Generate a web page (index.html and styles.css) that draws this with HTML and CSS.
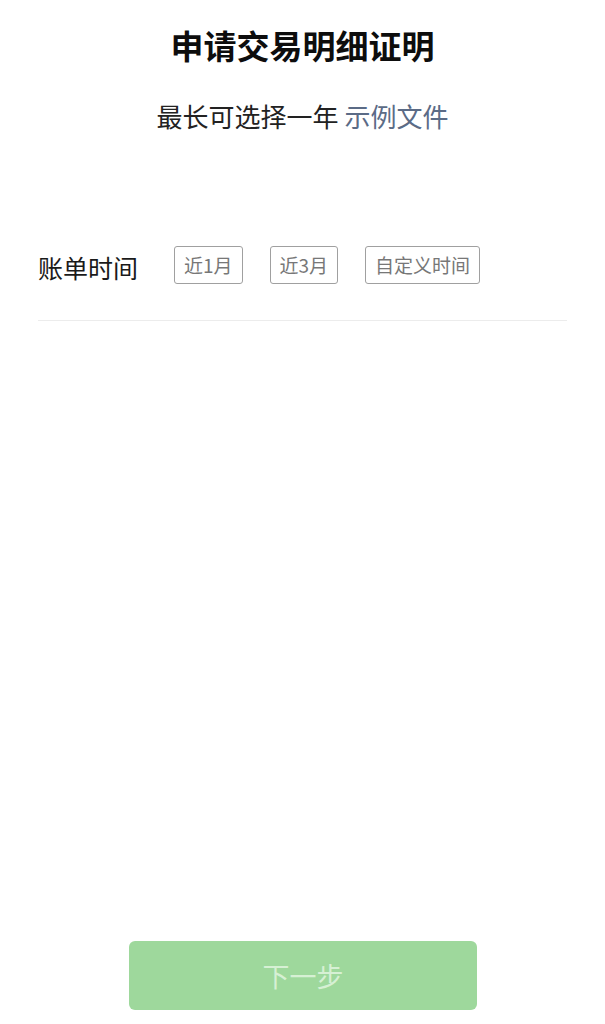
FILE: index.html
```html
<!DOCTYPE html>
<html lang="zh-CN">
<head>
<meta charset="utf-8">
<title>申请交易明细证明</title>
<link rel="stylesheet" href="styles.css">
</head>
<body>
<div class="page">
  <h1 class="title">申请交易明细证明</h1>
  <p class="subtitle">最长可选择一年 <a class="link">示例文件</a></p>
  <div class="row">
    <span class="label">账单时间</span>
    <div class="options">
      <span class="opt">近1月</span>
      <span class="opt">近3月</span>
      <span class="opt">自定义时间</span>
    </div>
  </div>
  <div class="divider"></div>
  <div class="footer">
    <button class="next">下一步</button>
  </div>
</div>
</body>
</html>
```
FILE: styles.css
```css
html, body {
  margin: 0;
  padding: 0;
  background: #fff;
}
body {
  font-family: "Noto Sans CJK SC", "Noto Sans", sans-serif;
  color: #111;
}
.page {
  min-height: 100vh;
  display: flex;
  flex-direction: column;
  box-sizing: border-box;
}
.title {
  margin: 29px 0 0;
  font-size: 33px;
  line-height: 33px;
  font-weight: 700;
  text-align: center;
  color: #0d0d0d;
}
.subtitle {
  margin: 41px 0 0;
  font-size: 26px;
  line-height: 26px;
  text-align: center;
  color: #222;
}
.link {
  color: #5b6b86;
}
.row {
  margin-top: 117px;
  padding-left: 38px;
  display: flex;
  align-items: center;
  height: 38px;
}
.label {
  font-size: 25px;
  line-height: 25px;
  color: #1a1a1a;
  width: 136px;
  margin-top: 4px;
}
.options {
  display: flex;
  gap: 27px;
}
.opt {
  box-sizing: border-box;
  height: 38px;
  padding: 0 9px;
  border: 1.5px solid #a0a0a0;
  border-radius: 3px;
  font-size: 19px;
  line-height: 35px;
  color: #777;
}
.divider {
  margin: 36px 38px 0;
  height: 1px;
  background: #ececec;
}
.footer {
  margin-top: auto;
  padding-bottom: 14px;
  display: flex;
  justify-content: center;
}
.next {
  width: 348px;
  height: 69px;
  border: none;
  border-radius: 6px;
  background: #9ed89c;
  color: #d6f0d4;
  font-family: "Noto Sans CJK SC", "Noto Sans", sans-serif;
  font-size: 27px;
  margin-left: 1px;
}
```
